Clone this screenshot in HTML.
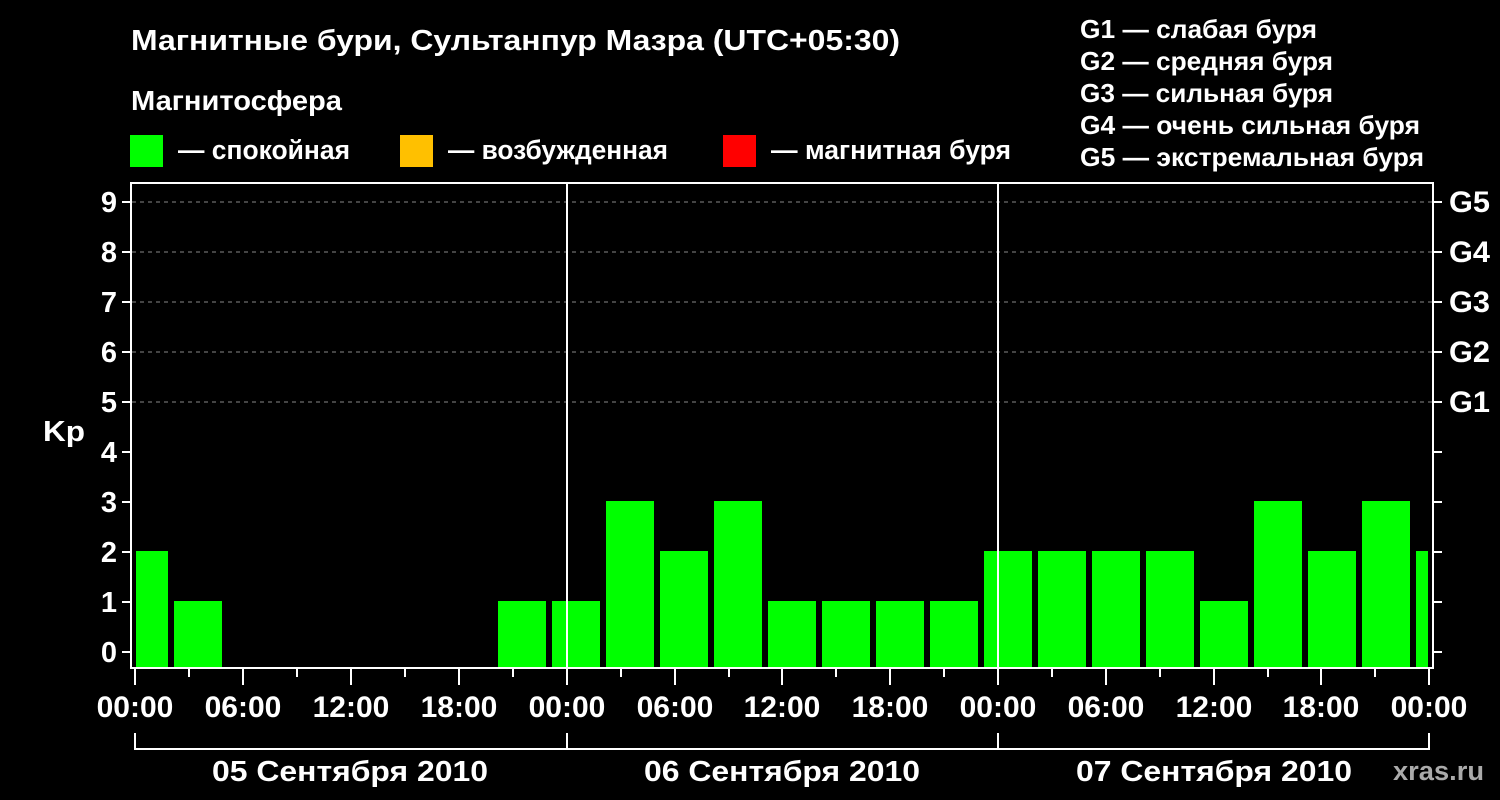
<!DOCTYPE html>
<html><head><meta charset="utf-8"><style>
html,body{margin:0;padding:0;background:#000;}
svg{display:block;}
text{font-family:"Liberation Sans",Arial,sans-serif;font-weight:bold;fill:#fff;}
</style></head><body>
<svg width="1500" height="800" viewBox="0 0 1500 800" xmlns="http://www.w3.org/2000/svg">
<rect width="1500" height="800" fill="#000"/>
<text x="131" y="50" font-size="29" textLength="769" lengthAdjust="spacingAndGlyphs">Магнитные бури, Сультанпур Мазра (UTC+05:30)</text>
<text x="131" y="110" font-size="28" textLength="211" lengthAdjust="spacingAndGlyphs">Магнитосфера</text>
<rect x="130" y="135" width="33" height="32" fill="#00ff00"/>
<text x="178" y="159" font-size="27" textLength="172" lengthAdjust="spacingAndGlyphs">— спокойная</text>
<rect x="400" y="135" width="33" height="32" fill="#ffc000"/>
<text x="448" y="159" font-size="27" textLength="220" lengthAdjust="spacingAndGlyphs">— возбужденная</text>
<rect x="723" y="135" width="33" height="32" fill="#ff0000"/>
<text x="771" y="159" font-size="27" textLength="240" lengthAdjust="spacingAndGlyphs">— магнитная буря</text>
<g font-size="26">
<text x="1080" y="38" textLength="237" lengthAdjust="spacingAndGlyphs">G1 — слабая буря</text>
<text x="1080" y="70" textLength="253" lengthAdjust="spacingAndGlyphs">G2 — средняя буря</text>
<text x="1080" y="102" textLength="253" lengthAdjust="spacingAndGlyphs">G3 — сильная буря</text>
<text x="1080" y="134" textLength="340" lengthAdjust="spacingAndGlyphs">G4 — очень сильная буря</text>
<text x="1080" y="166" textLength="344" lengthAdjust="spacingAndGlyphs">G5 — экстремальная буря</text>
</g>
<g stroke="#888" stroke-width="1" stroke-dasharray="4,4">
<line x1="132" y1="202" x2="1433" y2="202"/>
<line x1="132" y1="252" x2="1433" y2="252"/>
<line x1="132" y1="302" x2="1433" y2="302"/>
<line x1="132" y1="352" x2="1433" y2="352"/>
<line x1="132" y1="402" x2="1433" y2="402"/>
</g>
<g fill="#00ff00">
<rect x="136" y="551" width="32" height="117"/>
<rect x="174" y="601" width="48" height="67"/>
<rect x="498" y="601" width="48" height="67"/>
<rect x="552" y="601" width="48" height="67"/>
<rect x="606" y="501" width="48" height="167"/>
<rect x="660" y="551" width="48" height="117"/>
<rect x="714" y="501" width="48" height="167"/>
<rect x="768" y="601" width="48" height="67"/>
<rect x="822" y="601" width="48" height="67"/>
<rect x="876" y="601" width="48" height="67"/>
<rect x="930" y="601" width="48" height="67"/>
<rect x="984" y="551" width="48" height="117"/>
<rect x="1038" y="551" width="48" height="117"/>
<rect x="1092" y="551" width="48" height="117"/>
<rect x="1146" y="551" width="48" height="117"/>
<rect x="1200" y="601" width="48" height="67"/>
<rect x="1254" y="501" width="48" height="167"/>
<rect x="1308" y="551" width="48" height="117"/>
<rect x="1362" y="501" width="48" height="167"/>
<rect x="1416" y="551" width="12" height="117"/>
</g>
<g stroke="#fff" stroke-width="2" fill="none">
<rect x="131" y="183" width="1302" height="485"/>
<line x1="567" y1="183" x2="567" y2="668"/>
<line x1="998" y1="183" x2="998" y2="668"/>
<path d="M122 202H131M122 252H131M122 302H131M122 352H131M122 402H131M122 452H131M122 502H131M122 552H131M122 602H131M122 652H131"/>
<path d="M1433 202H1442M1433 252H1442M1433 302H1442M1433 352H1442M1433 402H1442M1433 452H1442M1433 502H1442M1433 552H1442M1433 602H1442M1433 652H1442"/>
<path d="M135 668V685M189 668V677M243 668V685M297 668V677M351 668V685M405 668V677M459 668V685M513 668V677M567 668V685M621 668V677M675 668V685M729 668V677M782 668V685M836 668V677M890 668V685M944 668V677M998 668V685M1052 668V677M1106 668V685M1160 668V677M1214 668V685M1268 668V677M1321 668V685M1375 668V677M1429 668V685"/>
<path d="M135 733V749H1429V733M567 733V749M998 733V749"/>
</g>
<g font-size="29" text-anchor="end">
<text x="117" y="212">9</text><text x="117" y="262">8</text><text x="117" y="312">7</text><text x="117" y="362">6</text><text x="117" y="412">5</text><text x="117" y="462">4</text><text x="117" y="512">3</text><text x="117" y="562">2</text><text x="117" y="612">1</text><text x="117" y="662">0</text>
</g>
<text x="43" y="441" font-size="29" textLength="42" lengthAdjust="spacingAndGlyphs">Kp</text>
<g font-size="30">
<text x="1449" y="212" textLength="41" lengthAdjust="spacingAndGlyphs">G5</text><text x="1449" y="262" textLength="41" lengthAdjust="spacingAndGlyphs">G4</text><text x="1449" y="312" textLength="41" lengthAdjust="spacingAndGlyphs">G3</text><text x="1449" y="362" textLength="41" lengthAdjust="spacingAndGlyphs">G2</text><text x="1449" y="412" textLength="41" lengthAdjust="spacingAndGlyphs">G1</text>
</g>
<g font-size="30" text-anchor="middle">
<text x="135" y="717">00:00</text><text x="243" y="717">06:00</text><text x="351" y="717">12:00</text><text x="459" y="717">18:00</text>
<text x="567" y="717">00:00</text><text x="675" y="717">06:00</text><text x="782" y="717">12:00</text><text x="890" y="717">18:00</text>
<text x="998" y="717">00:00</text><text x="1106" y="717">06:00</text><text x="1214" y="717">12:00</text><text x="1321" y="717">18:00</text>
<text x="1429" y="717">00:00</text>
</g>
<g font-size="29">
<text x="212" y="781" textLength="276" lengthAdjust="spacingAndGlyphs">05 Сентября 2010</text>
<text x="644" y="781" textLength="276" lengthAdjust="spacingAndGlyphs">06 Сентября 2010</text>
<text x="1076" y="781" textLength="276" lengthAdjust="spacingAndGlyphs">07 Сентября 2010</text>
</g>
<text x="1393" y="780" font-size="27" textLength="91" lengthAdjust="spacingAndGlyphs" style="fill:#aaa">xras.ru</text>
</svg>
</body></html>
